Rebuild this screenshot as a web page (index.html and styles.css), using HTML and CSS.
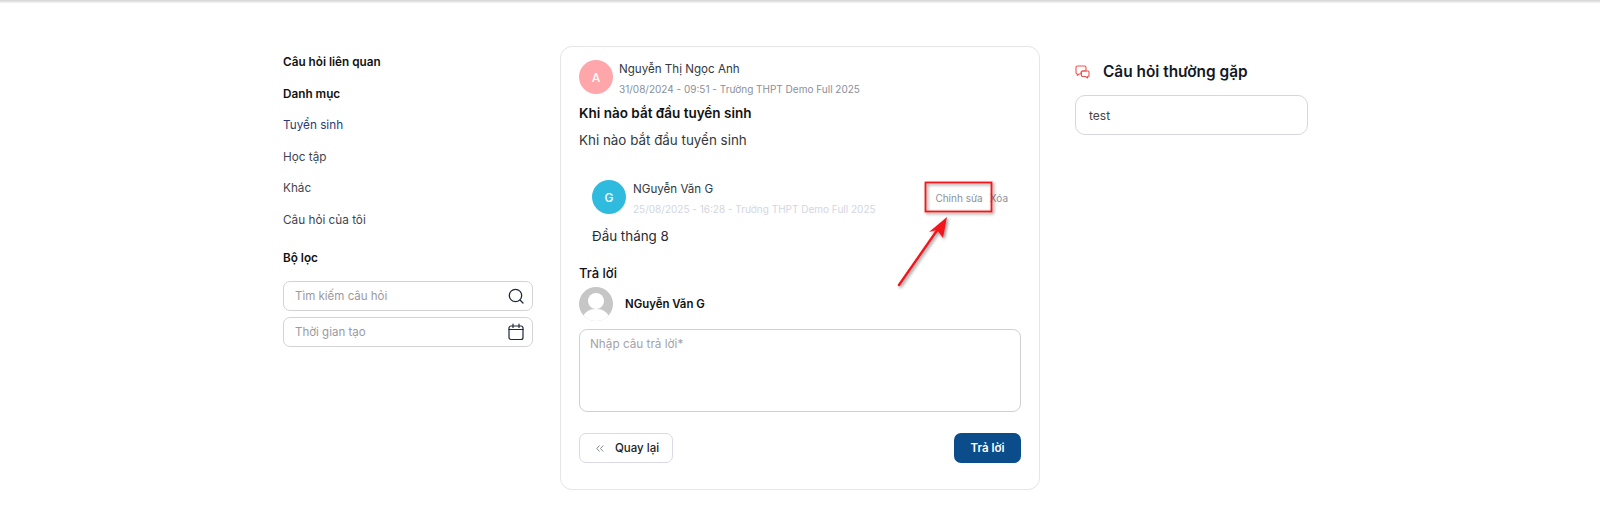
FILE: index.html
```html
<!DOCTYPE html>
<html lang="en">
<head>
  <meta charset="UTF-8" />
  <meta name="viewport" content="width=device-width, initial-scale=1.0" />
  <title>Câu hỏi thường gặp</title>
  <link rel="stylesheet" href="styles.css">
</head>
<body>
  <div class="topbar"></div>
  <div class="container">
    <div class="sidebar">
      <div class="side-title">Câu hỏi liên quan</div>
      <div class="side-title category-title">Danh mục</div>
      <a class="side-link active">Tuyển sinh</a>
      <a class="side-link">Học tập</a>
      <a class="side-link">Khác</a>
      <a class="side-link">Câu hỏi của tôi</a>
      <div class="side-title filter-title">Bộ lọc</div>
      <div class="filter-box">
        <span>Tìm kiếm câu hỏi</span>
        <svg width="18" height="18" viewBox="0 0 18 18" fill="none" stroke="#1f2937" stroke-width="1.3" stroke-linecap="round">
          <circle cx="8.5" cy="8.5" r="6.2" />
          <path d="M13 13l3 3" />
        </svg>
      </div>
      <div class="filter-box">
        <span>Thời gian tạo</span>
        <svg width="18" height="18" viewBox="0 0 18 18" fill="none" stroke="#1f2937" stroke-width="1.2" stroke-linecap="round">
          <rect x="2" y="3" width="14" height="13.5" rx="2" />
          <path d="M2 6.5h14M6 1.2v3.3M12 1.2v3.3" />
        </svg>
      </div>
    </div>

    <div class="card">
      <div class="person">
        <div class="avatar pink">A</div>
        <div class="person-info">
          <div class="person-name">Nguyễn Thị Ngọc Anh</div>
          <div class="person-meta">31/08/2024 - 09:51 - Trường THPT Demo Full 2025</div>
        </div>
      </div>
      <h3 class="question-title">Khi nào bắt đầu tuyển sinh</h3>
      <p class="question-text">Khi nào bắt đầu tuyển sinh</p>

      <div class="answer">
        <div class="person">
          <div class="avatar blue">G</div>
          <div class="person-info">
            <div class="person-name">NGuyễn Văn G</div>
            <div class="person-meta light">25/08/2025 - 16:28 - Trường THPT Demo Full 2025</div>
          </div>
          <div class="answer-actions">
            <a>Chỉnh sửa</a>
            <a>Xóa</a>
          </div>
        </div>
        <p class="answer-text">Đầu tháng 8</p>
      </div>

      <div class="reply-title">Trả lời</div>
      <div class="reply-user">
        <svg class="avatar-blank" width="34" height="34" viewBox="0 0 34 34">
          <defs><clipPath id="round"><circle cx="17" cy="17" r="17" /></clipPath></defs>
          <g clip-path="url(#round)">
            <rect width="34" height="34" fill="#c6c6c6" />
            <circle cx="17" cy="14" r="8" fill="#fff" />
            <path d="M3 34c1-9 7-12 14-12s13 3 14 12z" fill="#fff" />
          </g>
        </svg>
        <strong>NGuyễn Văn G</strong>
      </div>
      <div class="reply-input">Nhập câu trả lời*</div>
      <div class="buttons">
        <button class="btn-back">
          <svg width="8" height="7" viewBox="0 0 8 7" fill="none" stroke="#777a85" stroke-width="0.9">
            <path d="M3.5 0.5L0.8 3.5L3.5 6.5M7.2 0.5L4.5 3.5L7.2 6.5" />
          </svg>
          Quay lại
        </button>
        <button class="btn-send">Trả lời</button>
      </div>
    </div>

    <div class="faq">
      <div class="faq-head">
        <svg width="15" height="14" viewBox="0 0 15 14" fill="none" stroke="#f0524f" stroke-width="1.1" stroke-linejoin="round">
          <path d="M2.5 1h7A1.5 1.5 0 0 1 11 2.5V6H7.5A1.5 1.5 0 0 0 6 7.5V9H4L2.3 10.3V9A1.5 1.5 0 0 1 1 7.5v-5A1.5 1.5 0 0 1 2.5 1z" />
          <path d="M7.5 6H13a1 1 0 0 1 1 1v3.5a1 1 0 0 1-1 1h-.5V13L10.5 11.5H7.5a1 1 0 0 1-1-1V7a1 1 0 0 1 1-1z" />
        </svg>
        <span>Câu hỏi thường gặp</span>
      </div>
      <div class="faq-item">test</div>
    </div>
  </div>

  <svg class="markup" width="1600" height="524" viewBox="0 0 1600 524">
    <defs>
      <filter id="soft" x="-30%" y="-30%" width="160%" height="160%">
        <feDropShadow dx="1.5" dy="1.5" stdDeviation="1.5" flood-color="#000" flood-opacity="0.45" />
      </filter>
    </defs>
    <g filter="url(#soft)">
      <rect x="925.5" y="182.5" width="66" height="29" fill="none" stroke="#f2161c" stroke-width="1.8" />
      <path d="M899 285L938 229" stroke="#f2161c" stroke-width="2.4" stroke-linecap="round" />
      <path d="M947 217L943 238L937 230L929 232z" fill="#f2161c" />
    </g>
  </svg>
</body>
</html>
```

FILE: styles.css
```css
* {
  margin: 0;
  padding: 0;
  box-sizing: border-box;
}
body {
  position: relative;
  height: 524px;
  font-family: Inter, 'Noto Sans', sans-serif;
  background: #fff;
  color: #111827;
  overflow: hidden;
}
.topbar {
  height: 3px;
  background: linear-gradient(to bottom, #d4d4d4, #f4f4f4);
}
.container {
  display: flex;
  align-items: flex-start;
  padding: 43px 0 0 283px;
}

/* left column */
.sidebar {
  width: 250px;
  margin-right: 27px;
  display: flex;
  flex-direction: column;
}
.side-title {
  font-size: 11.75px;
  font-weight: 600;
  line-height: 16px;
  color: #111;
  margin: 8px 0 8px;
}
.category-title {
  margin-bottom: 7px;
}
.filter-title {
  margin: 15px 0 15px;
}
.side-link {
  font-size: 11.75px;
  line-height: 16px;
  color: #3f4450;
  margin: 8px 0 7.5px;
}
.side-link.active {
  color: #2a3a78;
}
.filter-box {
  height: 30px;
  border: 1px solid #d3d3d6;
  border-radius: 7px;
  padding: 0 7px 0 11px;
  margin-bottom: 6px;
  display: flex;
  align-items: center;
  justify-content: space-between;
  font-size: 11.5px;
  color: #9a9a9f;
}

/* middle card */
.card {
  width: 480px;
  height: 444px;
  border: 1px solid #e5e5ea;
  border-radius: 12px;
  padding: 13px 18px 0;
}
.person {
  display: flex;
  align-items: flex-start;
  height: 34px;
}
.avatar {
  width: 34px;
  height: 34px;
  border-radius: 50%;
  display: flex;
  align-items: center;
  justify-content: center;
  color: #fff;
  font-size: 12px;
  font-weight: 500;
  flex-shrink: 0;
  margin-right: 6px;
}
.pink {
  background: #ffa6aa;
}
.blue {
  background: #2fbbde;
  margin-right: 7px;
}
.person-info {
  padding-top: 1px;
}
.person-name {
  font-size: 11.6px;
  line-height: 16px;
  color: #333842;
  margin-bottom: 4.5px;
}
.person-meta {
  font-size: 10px;
  line-height: 14px;
  color: #8a8f99;
}
.person-meta.light {
  color: #d3d6df;
}
.question-title {
  font-size: 13.5px;
  font-weight: 600;
  line-height: 18px;
  color: #111;
  margin-top: 10px;
}
.question-text {
  font-size: 13.4px;
  line-height: 18px;
  color: #333842;
  margin-top: 9px;
}
.answer {
  padding: 0 13px;
  margin-top: 31px;
}
.answer-actions {
  margin-left: auto;
  align-self: center;
  display: flex;
  gap: 7px;
  font-size: 10px;
  color: #8d8f96;
  padding-top: 1px;
}
.answer-text {
  font-size: 13.4px;
  line-height: 18px;
  color: #272b36;
  margin-top: 13px;
}
.reply-title {
  font-size: 13px;
  font-weight: 500;
  line-height: 18px;
  color: #111;
  margin-top: 19px;
}
.reply-user {
  display: flex;
  align-items: center;
  gap: 12px;
  font-size: 11.4px;
  margin-top: 5px;
  height: 34px;
  color: #111;
}
.reply-user strong {
  font-weight: 600;
}
.avatar-blank {
  flex-shrink: 0;
}
.reply-input {
  height: 83px;
  margin-top: 8px;
  border: 1px solid #cfd0d4;
  border-radius: 8px;
  padding: 6px 10px;
  font-size: 11.75px;
  line-height: 16px;
  color: #a3a3a8;
}
.buttons {
  display: flex;
  justify-content: space-between;
  margin-top: 21px;
}
.buttons button {
  height: 30px;
  border-radius: 7px;
  font-family: inherit;
  font-size: 11.5px;
  font-weight: 500;
}
.btn-back {
  width: 94px;
  background: #fff;
  border: 1px solid #d9dae3;
  color: #222;
  display: flex;
  align-items: center;
  gap: 11px;
  padding-left: 16px;
}
.buttons .btn-send {
  width: 67px;
  background: #0b4d8a;
  border: none;
  color: #fff;
  font-weight: 600;
}

/* right column */
.faq {
  width: 233px;
  margin-left: 35px;
  padding-top: 16px;
}
.faq-head {
  display: flex;
  align-items: center;
  gap: 13px;
  font-size: 15.4px;
  font-weight: 600;
  line-height: 20px;
  color: #111827;
}
.faq-item {
  height: 40px;
  margin-top: 13px;
  border: 1px solid #d5d6e0;
  border-radius: 10px;
  padding: 0 13px;
  display: flex;
  align-items: center;
  font-size: 12px;
  color: #444;
}

/* red annotation drawn on top of the screenshot */
.markup {
  position: absolute;
  top: 0;
  left: 0;
  pointer-events: none;
}
```
